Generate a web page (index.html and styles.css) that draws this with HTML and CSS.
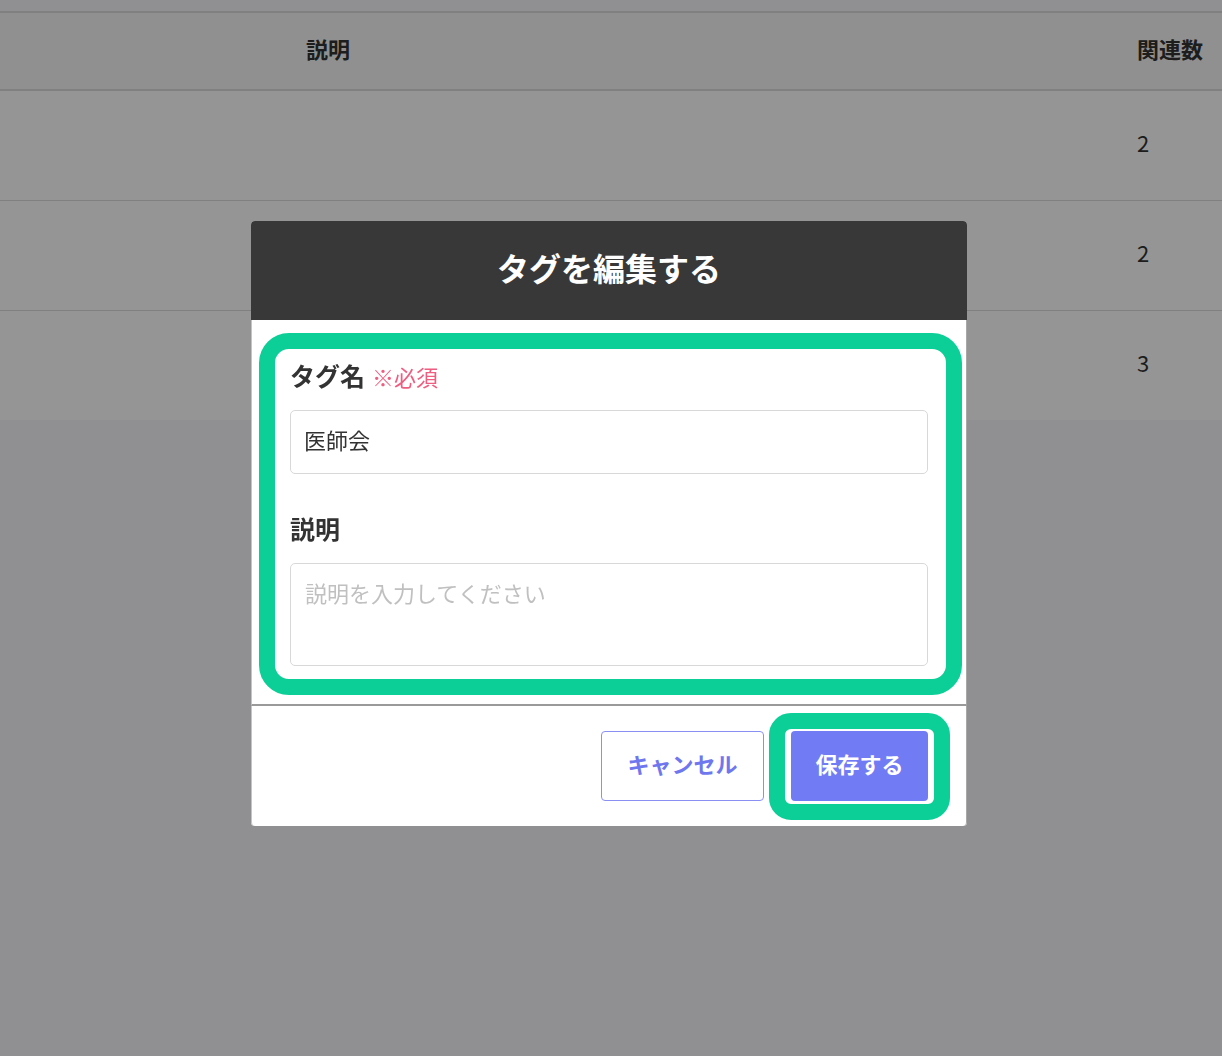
FILE: index.html
```html
<!DOCTYPE html>
<html lang="ja">
<head>
<meta charset="utf-8">
<title>タグを編集する</title>
<link rel="stylesheet" href="styles.css">
</head>
<body>
<div class="page">
  <div class="tags">
    <div class="row row-head">
      <div class="cell cell-desc">説明</div>
      <div class="cell"></div>
      <div class="cell cell-count">関連数</div>
    </div>
    <div class="row row-body">
      <div class="cell cell-desc"></div>
      <div class="cell"></div>
      <div class="cell cell-count">2</div>
    </div>
    <div class="row row-body">
      <div class="cell cell-desc"></div>
      <div class="cell"></div>
      <div class="cell cell-count">2</div>
    </div>
    <div class="row row-body row-last">
      <div class="cell cell-desc"></div>
      <div class="cell"></div>
      <div class="cell cell-count">3</div>
    </div>
  </div>
</div>

<div class="overlay">
  <div class="modal">
    <div class="modal-head">
      <h2 class="modal-title">タグを編集する</h2>
    </div>
    <div class="modal-body">
      <div class="field">
        <div class="field-label">タグ名<span class="required">※必須</span></div>
        <input class="text-input" type="text" value="医師会">
      </div>
      <div class="field">
        <div class="field-label">説明</div>
        <textarea class="text-area" placeholder="説明を入力してください"></textarea>
      </div>
      <div class="highlight highlight-body"></div>
    </div>
    <div class="modal-foot">
      <button class="btn btn-cancel" type="button">キャンセル</button>
      <div class="save-wrap">
        <button class="btn btn-save" type="button">保存する</button>
        <div class="highlight highlight-save"></div>
      </div>
    </div>
  </div>
</div>
</body>
</html>
```

FILE: styles.css
```css
* {
  box-sizing: border-box;
}

html, body {
  margin: 0;
  height: 100%;
}

body {
  font-family: "Noto Sans CJK JP", "Noto Sans", sans-serif;
  background: #f6f6fa;
  color: #333333;
}

.page {
  padding-top: 11px;
}

.tags {
  background: #ffffff;
}

.row {
  display: grid;
  grid-template-columns: 656px 1fr 85px;
  align-items: center;
}

.row-head {
  height: 80px;
  border-top: 2px solid #dcdcdc;
  border-bottom: 2px solid #dcdcdc;
  background: #f6f6f6;
  font-size: 22px;
  font-weight: 700;
  padding-bottom: 6px;
}

.row-body {
  height: 110px;
  border-bottom: 1px solid #dcdcdc;
  font-size: 22px;
  padding-bottom: 7px;
}

.row-last {
  height: 109px;
  border-bottom: none;
}

.cell-desc {
  text-align: center;
}

.cell-count {
  text-align: left;
  white-space: nowrap;
}

/* overlay + modal */
.overlay {
  position: fixed;
  inset: 0;
  background: rgba(0, 0, 0, 0.415);
  display: flex;
  align-items: flex-start;
  justify-content: flex-start;
  padding: 221px 0 0 251px;
}

.modal {
  width: 716px;
  background: #ffffff;
  border-radius: 4px;
}

.modal-head {
  height: 99px;
  padding-bottom: 8px;
  background: #383838;
  border-radius: 4px 4px 0 0;
  display: flex;
  align-items: center;
  justify-content: center;
}

.modal-title {
  margin: 0;
  color: #ffffff;
  font-size: 32px;
  font-weight: 700;
  line-height: 1;
}

.modal-body {
  position: relative;
  padding: 38px 38px 38px;
  border-bottom: 2px solid #9a9a9a;
  border-left: 1px solid #c4c4c4;
  border-right: 1px solid #a8a8a8;
  display: flex;
  flex-direction: column;
  gap: 37px;
}

.field {
  display: flex;
  flex-direction: column;
  gap: 16px;
}

.field-label {
  display: flex;
  align-items: baseline;
  gap: 7px;
  height: 36px;
  font-size: 25px;
  font-weight: 700;
  line-height: 34px;
  color: #333333;
}

.required {
  font-size: 22px;
  font-weight: 400;
  line-height: 1;
  color: #ef5d80;
}

.text-input,
.text-area {
  width: 100%;
  margin: 0;
  border: 1px solid #d8d8d8;
  border-radius: 5px;
  font-family: inherit;
  font-size: 22px;
  color: #333333;
  background: #ffffff;
  outline: none;
}

.text-input {
  height: 64px;
  padding: 0 13px 6px;
}

.text-area {
  height: 103px;
  padding: 12px 14px;
  line-height: 33px;
  resize: none;
  display: block;
}

.text-area::placeholder {
  color: #c0c0c0;
}

.modal-foot {
  display: flex;
  justify-content: flex-end;
  align-items: center;
  gap: 27px;
  padding: 25px 38px 25px;
  border-left: 1px solid #c4c4c4;
  border-right: 1px solid #a8a8a8;
  border-radius: 0 0 4px 4px;
}

.btn {
  height: 70px;
  border-radius: 4px;
  font-family: inherit;
  font-size: 22px;
  font-weight: 700;
  padding: 0 0 7px;
  cursor: pointer;
}

.btn-cancel {
  width: 163px;
  background: #ffffff;
  border: 1px solid #8a90f3;
  color: #6f77ef;
}

.btn-save {
  width: 137px;
  background: #717cf4;
  border: none;
  color: #ffffff;
  display: block;
}

.save-wrap {
  position: relative;
}

/* annotation highlights */
.highlight {
  position: absolute;
  border: 16px solid #0ccf97;
  pointer-events: none;
}

.highlight-body {
  top: 13px;
  left: 7px;
  right: 4px;
  bottom: 9px;
  border-radius: 30px;
}

.highlight-save {
  top: -18px;
  left: -22px;
  right: -22px;
  bottom: -19px;
  border-radius: 22px;
}
```
